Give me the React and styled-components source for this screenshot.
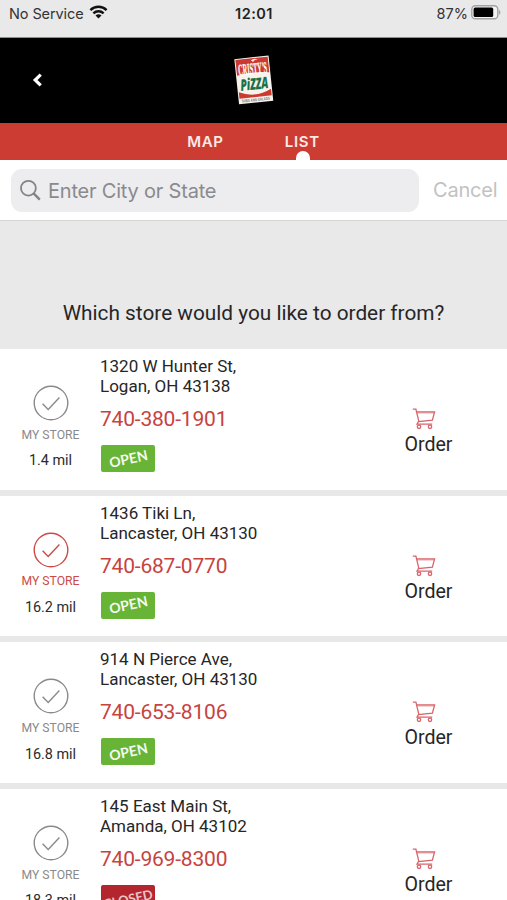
import React, { useState } from 'react';
import styled, { createGlobalStyle } from 'styled-components';

const STORES = [
  {
    id: 1,
    street: '1320 W Hunter St,',
    city: 'Logan, OH 43138',
    phone: '740-380-1901',
    distance: '1.4 mil',
    isOpen: true,
  },
  {
    id: 2,
    street: '1436 Tiki Ln,',
    city: 'Lancaster, OH 43130',
    phone: '740-687-0770',
    distance: '16.2 mil',
    isOpen: true,
  },
  {
    id: 3,
    street: '914 N Pierce Ave,',
    city: 'Lancaster, OH 43130',
    phone: '740-653-8106',
    distance: '16.8 mil',
    isOpen: true,
  },
  {
    id: 4,
    street: '145 East Main St,',
    city: 'Amanda, OH 43102',
    phone: '740-969-8300',
    distance: '18.3 mil',
    isOpen: false,
  },
];

export default function App() {
  const [tab, setTab] = useState('LIST');
  const [myStore, setMyStore] = useState(2);

  return (
    <>
      <GlobalStyle />
      <Screen>
        <StatusBar>
          <Carrier>
            No Service
            <WifiIcon />
          </Carrier>
          <Clock>12:01</Clock>
          <Battery>
            87%
            <BatteryIcon />
          </Battery>
        </StatusBar>
        <Header>
          <BackButton aria-label="Back">
            <svg width="11" height="14" viewBox="0 0 11 14">
              <path
                d="M8.7 1.7 3.2 7l5.5 5.3"
                fill="none"
                stroke="#fff"
                strokeWidth="3.2"
              />
            </svg>
          </BackButton>
          <Logo />
        </Header>
        <Tabs>
          {['MAP', 'LIST'].map(name => (
            <Tab key={name} $active={tab === name} onClick={() => setTab(name)}>
              {name}
            </Tab>
          ))}
        </Tabs>
        <SearchBar>
          <SearchBox>
            <SearchIcon />
            <SearchInput placeholder="Enter City or State" />
          </SearchBox>
          <Cancel>Cancel</Cancel>
        </SearchBar>
        <Question>Which store would you like to order from?</Question>
        <StoreList>
          {STORES.map(({ id, street, city, phone, distance, isOpen }) => (
            <StoreRow key={id}>
              <MyStore $selected={myStore === id} onClick={() => setMyStore(id)}>
                <CheckIcon />
                <MyStoreLabel>MY STORE</MyStoreLabel>
                <Distance>{distance}</Distance>
              </MyStore>
              <Info>
                <Address>{street}</Address>
                <Address>{city}</Address>
                <Phone>{phone}</Phone>
                <Badge $isOpen={isOpen}>
                  <BadgeText $isOpen={isOpen}>
                    {isOpen ? 'OPEN' : 'CLOSED'}
                  </BadgeText>
                </Badge>
              </Info>
              <Order>
                <CartIcon />
                <OrderLabel>Order</OrderLabel>
              </Order>
            </StoreRow>
          ))}
        </StoreList>
      </Screen>
    </>
  );
}

const WifiIcon = () => (
  <svg width="19" height="14" viewBox="0 0 18 14">
    <g fill="none" stroke="#111" strokeWidth="2.4">
      <path d="M.9 5.1a11.6 11.6 0 0 1 16.2 0" />
      <path d="M3.9 8.3a7.3 7.3 0 0 1 10.2 0" />
    </g>
    <path d="M9 13.6 6 10.6a4.3 4.3 0 0 1 6 0z" fill="#111" />
  </svg>
);

const BatteryIcon = () => (
  <svg width="30" height="15" viewBox="0 0 30 15">
    <rect
      x=".8"
      y=".8"
      width="26"
      height="13"
      rx="3.6"
      fill="#f4f4f4"
      stroke="#a2a2a2"
      strokeWidth="1.4"
    />
    <rect x="2.6" y="2.6" width="19.6" height="9.4" rx="1.6" fill="#000" />
    <path d="M28.2 5.1c1.5.6 1.5 4 0 4.6z" fill="#999" />
  </svg>
);

const Logo = () => (
  <svg width="60" height="64" viewBox="-9 -6 60 64">
    <g transform="rotate(-6 21 26)">
      <rect x="3.6" y="3.2" width="34.4" height="45.4" fill="#f7f3ec" />
      <path d="M4.6 4.2H37V20q-16-3-32.4 0z" fill="#cb3a31" />
      <path d="M20 6q3.4-2.4 7 0-4-.2-5 2z" fill="#f7f3ec" />
      <path d="M4.6 36.5q16 8 32.4 0v6.6H4.6z" fill="#cb3a31" />
      <text
        x="20.8"
        y="20"
        textAnchor="middle"
        textLength="29"
        lengthAdjust="spacingAndGlyphs"
        fontFamily="'Liberation Serif', serif"
        fontWeight="700"
        fontSize="16"
        fill="#fff"
        stroke="#fff"
        strokeWidth=".3"
      >
        CRISTY'S
      </text>
      <text
        x="20.8"
        y="35.6"
        textAnchor="middle"
        textLength="28"
        lengthAdjust="spacingAndGlyphs"
        fontFamily="'Open Sans', sans-serif"
        fontWeight="800"
        fontStyle="italic"
        fontSize="16"
        fill="#17724a"
      >
        PiZZA
      </text>
      <text
        x="20.8"
        y="47.2"
        textAnchor="middle"
        textLength="28"
        lengthAdjust="spacingAndGlyphs"
        fontFamily="Roboto, sans-serif"
        fontWeight="700"
        fontSize="4"
        fill="#75847b"
      >
        SUBS AND SALADS
      </text>
    </g>
  </svg>
);

const SearchIcon = () => (
  <svg width="22" height="22" viewBox="0 0 22 22">
    <g fill="none" stroke="#838386">
      <circle cx="8.4" cy="9.2" r="7.4" strokeWidth="1.8" />
      <path d="m13.6 14.4 6.2 6.2" strokeWidth="2.4" />
    </g>
  </svg>
);

const CheckIcon = () => (
  <svg width="36" height="36" viewBox="0 0 36 36">
    <g fill="none" stroke="currentColor" strokeWidth="1.4">
      <circle cx="18" cy="18" r="16.8" />
      <path d="m9.6 18.8 5.6 5.8L26.4 12.6" />
    </g>
  </svg>
);

const CartIcon = () => (
  <svg width="24" height="22" viewBox="0 0 24 22">
    <g fill="none" stroke="#d9646a" strokeWidth="1.3">
      <path d="M.8 1.2h3.1l3 12.4" />
      <path d="M4.6 3.8h18l-2.2 8.4-14 1.3-1.4 2.6h15.2" />
      <path d="M5 4.9h17" strokeWidth=".7" />
      <circle cx="7" cy="18.8" r="1.7" />
      <circle cx="18" cy="18.8" r="1.7" />
    </g>
  </svg>
);

const GlobalStyle = createGlobalStyle`
  * {
    box-sizing: border-box;
  }

  body {
    margin: 0;
    overflow: hidden;
    font-family: Roboto, sans-serif;
  }

  button,
  input {
    margin: 0;
    padding: 0;
    border: none;
    background: none;
    font: inherit;
    letter-spacing: inherit;
    color: inherit;
  }

  svg {
    display: block;
    flex-shrink: 0;
  }
`;

const Screen = styled.div`
  display: flex;
  flex-direction: column;
  width: 507px;
  height: 900px;
  overflow: hidden;
  background: #fff;
`;

const StatusBar = styled.div`
  display: grid;
  grid-template-columns: 1fr auto 1fr;
  flex-shrink: 0;
  height: 38px;
  padding: 4px 6px 0 9px;
  border-bottom: 1px solid #8d8d8d;
  background: #e9e9e9;
  font-family: Inter, sans-serif;
  font-size: 14.5px;
  line-height: 19px;
  color: #333;
`;

const Carrier = styled.div`
  display: flex;
  gap: 5px;
  letter-spacing: -0.1px;

  svg {
    margin-top: 1px;
  }
`;

const Clock = styled.div`
  margin-left: -2px;
  font-weight: 600;
  letter-spacing: 0.5px;
  color: #222;
`;

const Battery = styled.div`
  display: flex;
  justify-content: flex-end;
  gap: 3px;

  svg {
    margin-top: 1px;
  }
`;

const Header = styled.header`
  display: grid;
  grid-template-columns: 1fr auto 1fr;
  align-items: center;
  flex-shrink: 0;
  height: 85px;
  padding-bottom: 1px;
  background: #000;
`;

const BackButton = styled.button`
  justify-self: start;
  margin-left: 32px;
  cursor: pointer;
`;

const Tabs = styled.nav`
  display: flex;
  justify-content: center;
  flex-shrink: 0;
  gap: 61px;
  height: 37px;
  background: #cd3c33;
`;

const Tab = styled.button`
  position: relative;
  font-family: Inter, sans-serif;
  font-size: 15px;
  font-weight: 600;
  letter-spacing: 0.7px;
  color: #fbe9e7;
  cursor: pointer;

  &::after {
    content: '';
    display: ${({ $active }) => ($active ? 'block' : 'none')};
    position: absolute;
    bottom: 0;
    left: calc(50% - 6px);
    width: 14px;
    height: 9px;
    border-radius: 7px 7px 0 0;
    background: #fff;
  }
`;

const SearchBar = styled.div`
  display: flex;
  align-items: center;
  flex-shrink: 0;
  gap: 14px;
  height: 61px;
  padding: 0 0 0 11px;
  border-bottom: 1px solid #d6d6d6;
  font-family: Inter, sans-serif;
  font-size: 20px;
  letter-spacing: -0.2px;
`;

const SearchBox = styled.div`
  display: flex;
  align-items: center;
  flex-shrink: 0;
  gap: 6px;
  width: 408px;
  height: 43px;
  padding-left: 9px;
  border-radius: 11px;
  background: #ededef;
`;

const SearchInput = styled.input`
  flex: 1;
  padding-top: 2px;
  outline: none;
  color: #333;

  &::placeholder {
    color: #8a8a8e;
    opacity: 1;
  }
`;

const Cancel = styled.button`
  color: #c2c2c2;
`;

const Question = styled.div`
  flex-shrink: 0;
  height: 128px;
  padding-top: 79px;
  background: #e9e9e9;
  font-size: 20.8px;
  line-height: 26px;
  text-align: center;
  color: #262626;
`;

const StoreList = styled.div`
  display: flex;
  flex-direction: column;
`;

const StoreRow = styled.div`
  display: flex;
  flex-shrink: 0;
  height: 146.7px;
  border-bottom: 6px solid #e8e8e8;
  background: #fff;
`;

const MyStore = styled.div`
  display: flex;
  flex-direction: column;
  align-items: center;
  width: 101px;
  padding-top: 36px;
  color: ${({ $selected }) => ($selected ? '#cb4a48' : '#8a8a8a')};
  cursor: pointer;
`;

const MyStoreLabel = styled.div`
  margin-top: 5.5px;
  font-size: 12.2px;
  line-height: 16px;
`;

const Distance = styled.div`
  margin-top: 9.8px;
  font-size: 14.4px;
  line-height: 18px;
  color: #2b2b2b;
`;

const Info = styled.div`
  flex: 1;
  padding-top: 7.1px;
`;

const Address = styled.div`
  margin-left: -1px;
  font-size: 17px;
  line-height: 20px;
  color: #262626;
`;

const Phone = styled.div`
  margin: 10px 0 0 -1px;
  font-size: 21px;
  line-height: 26px;
  letter-spacing: -0.2px;
  color: #c6433f;
`;

const Badge = styled.div`
  display: flex;
  align-items: center;
  justify-content: center;
  width: 54px;
  height: 27px;
  margin-top: 13px;
  border-radius: 2px;
  background: ${({ $isOpen }) => ($isOpen ? '#67b436' : '#b3262e')};
`;

const BadgeText = styled.span`
  font-family: Lato, sans-serif;
  font-size: ${({ $isOpen }) => ($isOpen ? '14px' : '13px')};
  font-weight: 700;
  line-height: 16px;
  color: ${({ $isOpen }) => ($isOpen ? '#f4faef' : '#ecc4c6')};
  transform: rotate(-12deg);
`;

const Order = styled.div`
  display: flex;
  flex-direction: column;
  align-items: center;
  width: 157px;
  padding-top: 59px;
  cursor: pointer;

  svg {
    margin-right: 9px;
  }
`;

const OrderLabel = styled.div`
  margin-top: 3px;
  font-size: 19.6px;
  line-height: 24px;
  color: #262626;
`;
